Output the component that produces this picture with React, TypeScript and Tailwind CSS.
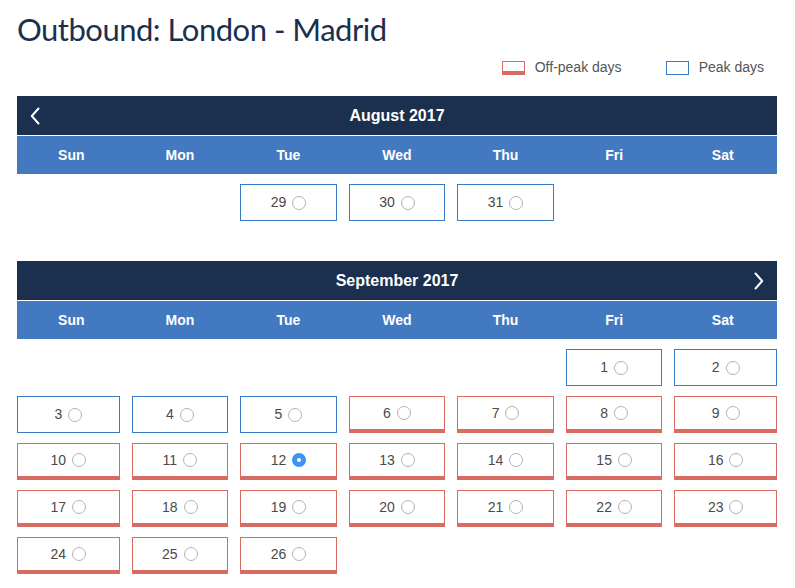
import React from 'react';

type Day = { d: number; peak: boolean; selected?: boolean };

const DAY_NAMES = ['Sun', 'Mon', 'Tue', 'Wed', 'Thu', 'Fri', 'Sat'];

const august: (Day | null)[] = [null, null, { d: 29, peak: true }, { d: 30, peak: true }, { d: 31, peak: true }];

const septPeak = [1, 2, 3, 4, 5];
const september: (Day | null)[] = [
  null, null, null, null, null,
  ...Array.from({ length: 26 }, (_, i) => ({ d: i + 1, peak: septPeak.includes(i + 1), selected: i + 1 === 12 })),
];

const Chevron = ({ dir }: { dir: 'left' | 'right' }) => (
  <svg width="10" height="18" viewBox="0 0 10 18" fill="none">
    <polyline
      points={dir === 'left' ? '8.5,1.5 1.8,9 8.5,16.5' : '1.5,1.5 8.2,9 1.5,16.5'}
      stroke="#ffffff"
      strokeWidth="2"
      strokeLinecap="round"
      strokeLinejoin="round"
    />
  </svg>
);

const Radio = ({ on }: { on?: boolean }) =>
  on ? (
    <span className="w-[14px] h-[14px] rounded-full bg-[#3d92f2] flex items-center justify-center">
      <span className="w-[4px] h-[4px] rounded-full bg-white" />
    </span>
  ) : (
    <span className="w-[14px] h-[14px] rounded-full border border-[#b3b3b3] bg-white" />
  );

const Cell = ({ day, col }: { day: Day | null; col: number }) => {
  const pad = col === 0 ? 'pr-[6px]' : col === 6 ? 'pl-[6px]' : 'px-[6px]';
  if (!day) return <div className={pad} />;
  return (
    <div className={pad}>
      <div
        className={`h-[37px] flex items-center justify-center gap-[6px] bg-white border ${
          day.peak ? 'border-[#3a7bc8]' : 'border-[#d96b62] border-b-4'
        }`}
      >
        <span className="text-[14px] text-[#4a4a4a]">{day.d}</span>
        <Radio on={day.selected} />
      </div>
    </div>
  );
};

const Month = ({ title, days, prev, next }: { title: string; days: (Day | null)[]; prev?: boolean; next?: boolean }) => (
  <div>
    <div className="h-[39px] bg-[#1b2f4e] flex items-center justify-between px-[13px]">
      <div className="w-[10px]">{prev && <Chevron dir="left" />}</div>
      <span className="text-white font-bold text-[16px]">{title}</span>
      <div className="w-[10px]">{next && <Chevron dir="right" />}</div>
    </div>
    <div className="mt-px h-[38px] bg-[#4279c1] grid grid-cols-7 items-center">
      {DAY_NAMES.map(n => (
        <span key={n} className="text-center text-white font-bold text-[14px]">{n}</span>
      ))}
    </div>
    <div className="mt-[10px] grid grid-cols-7 gap-y-[10px]">
      {days.map((d, i) => (
        <Cell key={i} day={d} col={i % 7} />
      ))}
    </div>
  </div>
);

export default function App() {
  return (
    <div className="w-[795px] h-[588px] bg-white overflow-hidden pl-[17px] pr-[18px] font-['Liberation_Sans',Arial,sans-serif]">
      <h1 className="pt-[10px] text-[31px] leading-[38px] tracking-[-0.5px] text-[#1b2f4e] font-['Lato',sans-serif] font-normal">
        Outbound: London - Madrid
      </h1>
      <div className="mt-[9px] flex justify-end items-center pr-[13px] text-[14px] text-[#555555]">
        <span className="w-[23px] h-[14px] border border-[#d96b62] border-b-4" />
        <span className="ml-[10px]">Off-peak days</span>
        <span className="ml-[44px] w-[23px] h-[14px] border border-[#3a7bc8]" />
        <span className="ml-[10px]">Peak days</span>
      </div>
      <div className="mt-[18px]">
        <Month title="August 2017" days={august} prev />
      </div>
      <div className="mt-[40px]">
        <Month title="September 2017" days={september} next />
      </div>
    </div>
  );
}
